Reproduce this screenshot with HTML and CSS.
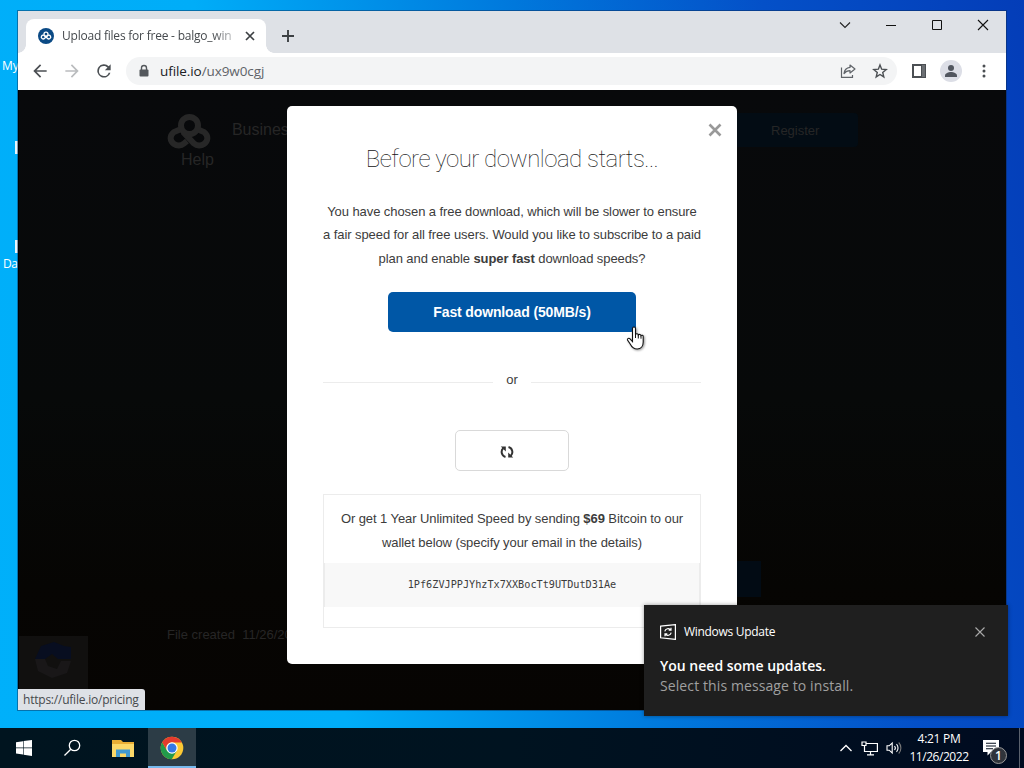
FILE: index.html
```html
<!DOCTYPE html>
<html lang="en">
<head>
    <meta charset="UTF-8">
    <meta name="viewport" content="width=device-width, initial-scale=1.0">
    <title>Upload files for free - balgo_win</title>
    <link rel="stylesheet" href="styles.css">
</head>
<body>
    <!--desktop icons peeking out behind the window-->
    <div class="desktop-icon icon-my">My</div>
    <div class="desktop-icon icon-da">Da</div>
    <div class="desktop-sliver sliver-one"></div>
    <div class="desktop-sliver sliver-two"></div>

    <!--browser window-->
    <div class="window">
        <div class="tab-strip">
            <div class="tab">
                <svg class="favicon" width="16" height="16" viewBox="0 0 16 16">
                    <circle cx="8" cy="8" r="8" fill="#0b4a85"/>
                    <g fill="none" stroke="#fff" stroke-width="1.3">
                        <circle cx="8" cy="6.2" r="2"/>
                        <path d="M6 7.300a1.900 1.900 0 1 0 .6 3L9.800 7.400"/>
                        <path d="M10 7.300a1.900 1.900 0 1 1-.6 3L6.200 7.400"/>
                    </g>
                </svg>
                <span class="tab-title">Upload files for free - balgo_win</span>
                <svg class="tab-close" width="10" height="10" viewBox="0 0 10 10"><path d="M1 1l8 8M9 1l-8 8" stroke="#3c4043" stroke-width="1.7"/></svg>
            </div>
            <svg class="new-tab" width="14" height="14" viewBox="0 0 14 14"><path d="M7 1v12M1 7h12" stroke="#3c4043" stroke-width="1.9"/></svg>
            <div class="window-controls">
                <svg width="12" height="12" viewBox="0 0 12 12"><path d="M1 3.5l5 5 5-5" fill="none" stroke="#222" stroke-width="1.1"/></svg>
                <svg width="12" height="12" viewBox="0 0 12 12"><path d="M1 6.5h10" stroke="#111"/></svg>
                <svg width="12" height="12" viewBox="0 0 12 12"><path d="M1.5 1.5h9v9h-9z" fill="none" stroke="#111"/></svg>
                <svg width="12" height="12" viewBox="0 0 12 12"><path d="M1 1l10 10M11 1L1 11" stroke="#111" stroke-width="1.1"/></svg>
            </div>
        </div>

        <div class="toolbar">
            <svg class="nav-icon" width="20" height="20" viewBox="0 0 24 24"><path fill="#4b4f53" d="M20 11H7.8l5.6-5.6L12 4l-8 8 8 8 1.4-1.4L7.8 13H20z"/></svg>
            <svg class="nav-icon" width="20" height="20" viewBox="0 0 24 24"><path fill="#babcbe" d="M4 11h12.2l-5.6-5.6L12 4l8 8-8 8-1.4-1.4 5.6-5.6H4z"/></svg>
            <svg class="nav-icon" width="20" height="20" viewBox="0 0 24 24"><path fill="#4b4f53" d="M17.7 6.3A8 8 0 1 0 19.7 14h-2.1A6 6 0 1 1 12 6c1.7 0 3.1.7 4.2 1.8L13 11h7V4z"/></svg>
            <div class="address-bar">
                <svg class="lock" width="12" height="14" viewBox="0 0 12 14"><path d="M3.5 6V4a2.5 2.5 0 0 1 5 0v2" fill="none" stroke="#54585c" stroke-width="1.4"/><rect x="1.5" y="5.5" width="9" height="7" rx="1" fill="#54585c"/></svg>
                <span class="url">ufile.io<span class="path">/ux9w0cgj</span></span>
                <svg class="share" width="16" height="16" viewBox="0 0 16 16"><g fill="none" stroke="#5f6368" stroke-width="1.2"><path d="M1.5 4.5v9.9h11V12"/><path d="M10 2l5 4-5 4V7.6c-2.8 0-4.4.8-6 3C4.400 7.200 6.400 4.900 10 4.400z" stroke-linejoin="round"/></g></svg>
                <svg width="16" height="16" viewBox="0 0 24 24"><path d="M12 3l2.500 6.300 6.800.500-5.200 4.400 1.600 6.600L12 17.200l-5.700 3.600 1.600-6.600-5.200-4.400 6.800-.5z" fill="none" stroke="#4b4f53" stroke-width="2.100"/></svg>
            </div>
            <svg class="panel-icon" width="14" height="14" viewBox="0 0 14 14"><path fill="#4b4f53" d="M0 0h14v14H0z"/><path fill="#fff" d="M2 2h7v10H2z"/><path fill="#6b6f73" d="M10 1h3v12h-3z"/></svg>
            <svg class="avatar" width="22" height="22" viewBox="0 0 22 22"><circle cx="11" cy="11" r="11" fill="#dcdee6"/><circle cx="11" cy="8" r="3" fill="#51565f"/><path d="M5 17v-1.500c0-2.300 3.500-3.500 6-3.500s6 1.200 6 3.500V17z" fill="#51565f"/></svg>
            <svg width="4" height="14" viewBox="0 0 4 14" fill="#4b4f53"><circle cx="2" cy="2" r="1.500"/><circle cx="2" cy="7" r="1.500"/><circle cx="2" cy="12" r="1.500"/></svg>
        </div>

        <!--dimmed page under the modal-->
        <div class="page">
            <div class="site-nav">
                <div class="brand">
                    <svg width="46" height="36" viewBox="0 0 46 36"><g fill="none" stroke="#272727" stroke-width="6"><path d="M14 16.500l-6 2.500c-5 4-4 9 0 12 3 2 7 2 10-.5l3-2.500"/><path d="M32 16.500l6 2.500c5 4 4 9 0 12-3 2-7 2-10-.5L17 19"/><circle cx="23.500" cy="12.500" r="8.500"/></g></svg>
                    <span class="help">Help</span>
                </div>
                <span class="business">Business</span>
                <span class="register">Register</span>
            </div>
            <div class="file-created">File created&nbsp; 11/26/2022</div>
            <div class="page-button"></div>
            <div class="captcha">
                <svg width="40" height="40" viewBox="0 0 40 40"><path d="M2 19l6-13 13-4 10 4 7 1v12H25l-6-5-7 5z" fill="#080e20"/><path d="M2 19h10l3 7 9 3 4-8h10l-4 12-15 5-14-7z" fill="#191718"/></svg>
            </div>

            <div class="modal">
                <svg class="modal-close" width="14" height="14" viewBox="0 0 14 14"><path d="M1.500 1.500l11 11M12.500 1.500l-11 11" stroke="#999" stroke-width="2.600"/></svg>
                <h1>Before your download starts...</h1>
                <p class="intro">You have chosen a free download, which will be slower to ensure<br>a fair speed for all free users. Would you like to subscribe to a paid<br>plan and enable <b>super fast</b> download speeds?</p>
                <button class="fast-button">Fast download (50MB/s)</button>
                <div class="divider"><span>or</span></div>
                <button class="slow-button">
                    <svg width="14" height="14" viewBox="0 0 14 14"><g fill="none" stroke="#333" stroke-width="2"><path d="M5.500 12A5.200 5.200 0 0 1 3.200 3.300"/><path d="M8.500 2a5.200 5.200 0 0 1 2.300 8.700"/></g><path d="M.8 1.600h5v5zM13.200 12.400h-5v-5z" fill="#333"/></svg>
                </button>
                <div class="bitcoin">
                    <p>Or get 1 Year Unlimited Speed by sending <b>$69</b> Bitcoin to our<br>wallet below (specify your email in the details)</p>
                    <div class="wallet">1Pf6ZVJPPJYhzTx7XXBocTt9UTDutD31Ae</div>
                </div>
            </div>
        </div>
        <div class="status-bar">https://ufile.io/pricing</div>
    </div>

    <!--mouse cursor-->
    <svg class="cursor" width="22" height="26" viewBox="0 0 22 26">
        <path d="M7.500 2.500c0-2 3-2 3 0v6c.5-1.200 2.600-1 2.800.5.600-1 2.500-.7 2.700.7.800-.8 2.200-.4 2.200.8v5.500c0 4-2.200 7-6 7-4 0-5.500-2-7-5L2.500 14c-.6-1.500 1.500-2.300 2.500-1.200l2.500 2.700z" fill="#fff" stroke="#111" stroke-width="1.100"/>
        <path d="M10.500 8v4M13.300 9v3.500M16 9.700v3" stroke="#111" stroke-width="1"/>
    </svg>

    <!--windows notification-->
    <div class="toast">
        <div class="toast-header">
            <svg width="16" height="16" viewBox="0 0 16 16" fill="none" stroke="#fff" stroke-width="1.200"><path d="M.6 2.200L15.400.6v14.800L.6 13.800z"/><path d="M4.800 7.300a3.400 3.400 0 0 1 6-1.300M11 3.800V6.200H8.700M11.200 8.700a3.400 3.400 0 0 1-6 1.300M5 12.200V9.800h2.300"/></svg>
            <span>Windows Update</span>
            <svg class="toast-close" width="10" height="10" viewBox="0 0 10 10"><path d="M.5.5l9 9M9.500.5l-9 9" stroke="#aaa" stroke-width="1.100"/></svg>
        </div>
        <div class="toast-title">You need some updates.</div>
        <div class="toast-text">Select this message to install.</div>
    </div>

    <!--taskbar-->
    <div class="taskbar">
        <div class="task"><svg width="16" height="16" viewBox="0 0 16 16" fill="#fff"><path d="M0 2.200l7-1v6.300H0zM7.600 1.100L16 0v7.500H7.600zM0 8.200h7v6.400l-7-1zM7.600 8.200H16V16l-8.400-1.200z"/></svg></div>
        <div class="task"><svg width="18" height="18" viewBox="0 0 18 18" fill="none" stroke="#fff" stroke-width="1.300"><circle cx="11.500" cy="6.500" r="5.200"/><path d="M7.800 10.200L1.500 16.500"/></svg></div>
        <div class="task folder"><svg width="22" height="19" viewBox="0 0 22 19"><path d="M0 1h9l2 2h11v15H0z" fill="#e9ae35"/><path d="M0 5h22v13H0z" fill="#fcd868"/><path d="M4 10.500h14V18h-4v-3.500H8V18H4z" fill="#4199d1"/></svg></div>
        <div class="task active"><svg width="24" height="24" viewBox="0 0 24 24"><circle cx="12" cy="12" r="11.300" fill="#fcc934"/><path d="M2.200 6.300A11.300 11.300 0 0 0 11.800 23.300l5-8.500L12 12l-4.900 2.800z" fill="#229a4b"/><path d="M2.200 6.300A11.300 11.300 0 0 1 21.800 6.500H12a5.600 5.600 0 0 0-5 8.200z" fill="#e33b2e"/><circle cx="12" cy="12" r="5.700" fill="#fff"/><circle cx="12" cy="12" r="4.500" fill="#3478e6"/></svg></div>
        <div class="tray">
            <svg width="14" height="8" viewBox="0 0 14 8" fill="none" stroke="#fff" stroke-width="1.300"><path d="M1.500 7L7 1.500 12.500 7"/></svg>
            <svg width="17" height="15" viewBox="0 0 17 15" fill="none" stroke="#fff" stroke-width="1.200"><path d="M5.500 2.500h10.900v8H3.500V5M1 1h4v3.500H1zM9.500 10.500v3M6 13.800h7"/></svg>
            <svg width="17" height="14" viewBox="0 0 17 14" fill="none" stroke="#fff" stroke-width="1.100"><path d="M1 4.800h2.200L6.200 2v10L3.200 9.200H1zM8.500 5a3 3 0 0 1 0 4M10.500 3.200a5.500 5.500 0 0 1 0 7.600"/><path d="M12.700 1.500a8 8 0 0 1 0 11" stroke="#777"/></svg>
            <div class="clock"><div>4:21 PM</div><div class="date">11/26/2022</div></div>
            <div class="action-center">
                <svg width="16" height="16" viewBox="0 0 16 16"><path d="M0 0h16v12H8l-3.500 3.500V12H0z" fill="#fff"/><path d="M3 3.200h10M3 6h10M3 8.800h7" stroke="#07101f" stroke-width="1.100"/></svg>
                <span class="badge">1</span>
            </div>
            <div class="show-desktop"></div>
        </div>
    </div>
</body>
</html>
```
FILE: styles.css
```css
/*desktop*/
* {
    box-sizing: border-box;
}

body {
    margin: 0;
    width: 1024px;
    height: 768px;
    overflow: hidden;
    position: relative;
    font-family: "Open Sans", "Noto Sans", sans-serif;
    font-size: 12px;
    background: linear-gradient(78deg, #00b0fa 0%, #00adf8 30%, #0078dc 57%, #0450c8 78%, #043db8 100%);
}

svg {
    display: block;
    flex-shrink: 0;
}

button {
    cursor: pointer;
}

.desktop-icon {
    position: absolute;
    color: #fff;
    line-height: 16px;
}

.icon-my {
    left: 2px;
    top: 58px;
}

.icon-da {
    left: 3px;
    top: 256px;
    letter-spacing: -0.5px;
}

.desktop-sliver {
    position: absolute;
    left: 15px;
    width: 3px;
    height: 13px;
    background: #e8f5fb;
}

.sliver-one {
    top: 141px;
}

.sliver-two {
    top: 240px;
}

/*browser window*/
.window {
    position: absolute;
    left: 18px;
    top: 11px;
    width: 988px;
    height: 699px;
    display: flex;
    flex-direction: column;
    background: #fff;
    box-shadow: 0 0 0 1px rgba(10, 40, 80, 0.45);
}

.tab-strip {
    height: 42px;
    background: #dee1e6;
    display: flex;
    padding-left: 8px;
}

.tab {
    position: relative;
    width: 240px;
    height: 34px;
    margin-top: 8px;
    padding: 0 11px 0 12px;
    display: flex;
    align-items: center;
    background: #fff;
    border-radius: 8px 8px 0 0;
}

/*curved feet of the tab*/
.tab::before,
.tab::after {
    content: "";
    position: absolute;
    bottom: 0;
    width: 8px;
    height: 8px;
}

.tab::before {
    left: -8px;
    background: radial-gradient(circle at 0 0, transparent 7.5px, #fff 8px);
}

.tab::after {
    right: -8px;
    background: radial-gradient(circle at 100% 0, transparent 7.5px, #fff 8px);
}

.tab-title {
    flex: 1;
    position: relative;
    top: -1px;
    margin-left: 8px;
    white-space: nowrap;
    overflow: hidden;
    letter-spacing: -0.22px;
    color: #45494d;
    -webkit-mask-image: linear-gradient(90deg, #000 82%, transparent 99%);
    mask-image: linear-gradient(90deg, #000 82%, transparent 99%);
}

.new-tab {
    margin: 18px 0 0 15px;
}

.window-controls {
    margin-left: auto;
    margin-right: 17px;
    padding-top: 8px;
    display: flex;
    gap: 34px;
}

.toolbar {
    height: 37px;
    display: flex;
    align-items: center;
    padding: 0 20px 2px 12px;
}

.nav-icon {
    margin-right: 12px;
}

.address-bar {
    flex: 1;
    height: 28px;
    display: flex;
    align-items: center;
    padding: 0 9px 0 12px;
    border-radius: 14px;
    background: #f3f4f5;
}

.url {
    margin-left: 10px;
    font-size: 13.5px;
    letter-spacing: -0.08px;
    color: #202124;
}

.url .path {
    color: #5f6368;
}

.share {
    margin-left: auto;
    margin-right: 16px;
}

.panel-icon {
    margin-left: 15px;
}

.avatar {
    margin: 0 20px 0 14px;
}

/*dimmed page*/
.page {
    position: relative;
    flex: 1;
    padding-top: 16px;
    background: linear-gradient(180deg, #08090b 0%, #070909 50%, #060503 80%, #060402 100%);
    border-left: 1px solid #000;
    font-family: "Liberation Sans", sans-serif;
    color: #262626;
}

.site-nav {
    position: absolute;
    left: 147px;
    top: 23px;
    width: 692px;
    display: flex;
    font-size: 16px;
}

.brand {
    display: flex;
    flex-direction: column;
}

.help {
    margin-top: 1px;
    padding-left: 15px;
    line-height: 20px;
}

.business {
    margin-top: 8px;
    margin-left: 18px;
}

.register {
    margin-left: auto;
    width: 125px;
    height: 34px;
    line-height: 35px;
    padding-left: 38px;
    border-radius: 4px;
    background: #030c14;
    font-size: 13px;
}

.file-created {
    position: absolute;
    left: 148px;
    top: 537px;
    font-size: 13px;
}

.page-button {
    position: absolute;
    left: 700px;
    top: 471px;
    width: 42px;
    height: 36px;
    background: #020b14;
}

.captcha {
    position: absolute;
    left: 0;
    top: 546px;
    width: 69px;
    height: 60px;
    padding: 4px 14px;
    background: #11100f;
}

.status-bar {
    position: absolute;
    left: 0;
    bottom: 0;
    width: 127px;
    height: 21px;
    padding-left: 5px;
    line-height: 22px;
    letter-spacing: -0.22px;
    background: #dee1e6;
    border-top-right-radius: 3px;
    color: #45494d;
    white-space: nowrap;
}

/*download modal*/
.modal {
    position: relative;
    width: 450px;
    height: 558px;
    margin-left: 268px;
    padding: 39px 36px 0;
    background: #fff;
    border-radius: 5px;
    text-align: center;
    font-size: 13px;
    color: #3c3c3c;
}

.modal-close {
    position: absolute;
    right: 15px;
    top: 17px;
}

.modal h1 {
    margin: 0;
    font-family: Roboto, sans-serif;
    font-weight: 100;
    font-size: 24px;
    line-height: 28px;
    letter-spacing: -0.5px;
    color: #111;
    white-space: nowrap;
}

.modal p {
    margin: 0 -10px;
    white-space: nowrap;
    letter-spacing: -0.08px;
}

.modal .intro {
    margin-top: 27px;
    line-height: 23.4px;
}

.fast-button {
    display: block;
    width: 248px;
    height: 40px;
    margin: 22px auto 0;
    border: none;
    border-radius: 5px;
    background: #0057a6;
    color: #fff;
    font-family: "Liberation Sans", sans-serif;
    font-size: 14px;
    font-weight: bold;
    letter-spacing: -0.13px;
}

.divider {
    display: flex;
    align-items: center;
    gap: 13px;
    height: 20px;
    margin-top: 37px;
}

.divider::before,
.divider::after {
    content: "";
    flex: 1;
    height: 1px;
    margin-top: 7px;
    background: #ececec;
}

.slow-button {
    display: flex;
    align-items: center;
    width: 114px;
    height: 41px;
    margin: 41px auto 0;
    padding: 2px 0 0 44px;
    border: 1px solid #d9d9d9;
    border-radius: 5px;
    background: #fff;
}

.bitcoin {
    height: 134px;
    margin-top: 23px;
    padding-top: 12px;
    border: 1px solid #ececec;
}

.bitcoin p {
    line-height: 24px;
}

.wallet {
    height: 44px;
    margin-top: 8px;
    line-height: 44px;
    background: #f8f8f8;
    border: 1px solid #ececec;
    border-width: 0 1px;
    font-family: "DejaVu Sans Mono", monospace;
    font-size: 10.2px;
}

.cursor {
    position: absolute;
    left: 625px;
    top: 326px;
    filter: drop-shadow(1.5px 1.5px 1px rgba(0, 0, 0, 0.4));
}

/*notification*/
.toast {
    position: absolute;
    left: 644px;
    top: 605px;
    width: 364px;
    height: 111px;
    padding: 18px 16px 0;
    background: #1f1f1f;
    color: #fff;
    box-shadow: 0 0 4px rgba(0, 0, 0, 0.4);
}

.toast-header {
    display: flex;
    align-items: center;
    height: 18px;
}

.toast-header span {
    margin-left: 8px;
    margin-top: -1px;
    letter-spacing: -0.3px;
}

.toast-close {
    margin-left: auto;
    margin-right: 7px;
}

.toast-title {
    margin-top: 15px;
    font-size: 14px;
    font-weight: 600;
    line-height: 20px;
}

.toast-text {
    font-size: 14px;
    line-height: 20px;
    letter-spacing: 0.1px;
    color: #a0a0a0;
}

/*taskbar*/
.taskbar {
    position: absolute;
    left: 0;
    bottom: 0;
    width: 1024px;
    height: 40px;
    display: flex;
    background: linear-gradient(90deg, #00141f 0%, #001320 50%, #000b20 100%);
    color: #fff;
}

.task {
    width: 48px;
    display: flex;
    align-items: center;
    justify-content: center;
}

.task.folder {
    width: 52px;
    padding-left: 2px;
}

.task.active {
    padding-top: 1px;
    background: #2c3c46;
    border-bottom: 2px solid #76b9ed;
}

.tray {
    margin-left: auto;
    display: flex;
    align-items: center;
}

.tray svg + svg {
    margin-left: 8px;
}

.clock {
    width: 70px;
    margin-left: 1px;
    text-align: center;
    line-height: 18px;
    letter-spacing: -0.3px;
}

.clock .date {
    letter-spacing: -0.45px;
}

.action-center {
    position: relative;
    margin-left: 9px;
}

.badge {
    position: absolute;
    left: 7px;
    top: 7px;
    width: 17px;
    height: 17px;
    border: 1px solid #999;
    border-radius: 50%;
    background: #30343b;
    text-align: center;
    line-height: 15px;
    font-size: 12px;
    font-weight: 600;
}

.show-desktop {
    width: 5px;
    height: 40px;
    margin-left: 20px;
    border-left: 1px solid #5a616d;
}
```
